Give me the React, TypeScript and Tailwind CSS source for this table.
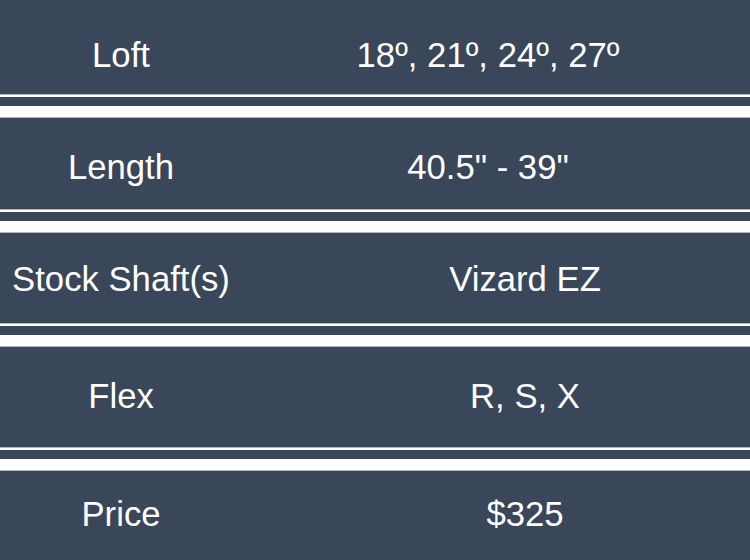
import React from "react";

const font = { fontFamily: '"Liberation Sans", Arial, sans-serif' };

function Sep() {
  return (
    <div className="flex flex-col">
      <div className="h-px bg-[#b3b8bf]" />
      <div className="h-[2px] bg-white" />
      <div className="h-[9px] bg-[#3a4659]" />
      <div className="h-[11px] bg-white" />
      <div className="h-px bg-[#b3b8bf]" />
    </div>
  );
}

export default function App() {
  return (
    <div
      className="w-[750px] h-[560px] overflow-hidden bg-[#3a4659] text-white text-[34.7px] leading-[34px]"
      style={font}
    >
      <div className="h-[94px] flex pt-[38px]">
        <div className="w-[242px] text-center">Loft</div>
        <div className="flex-1 text-center pr-[16px]">18º, 21º, 24º, 27º</div>
      </div>
      <Sep />
      <div className="h-[91px] flex pt-[32px]">
        <div className="w-[242px] text-center">Length</div>
        <div className="flex-1 text-center pr-[16px]">40.5" - 39"</div>
      </div>
      <Sep />
      <div className="h-[90px] flex pt-[29px]">
        <div className="w-[242px] text-center whitespace-nowrap">Stock Shaft(s)</div>
        <div className="flex-1 text-center pl-[58px]">Vizard EZ</div>
      </div>
      <Sep />
      <div className="h-[100px] flex pt-[32px]">
        <div className="w-[242px] text-center">Flex</div>
        <div className="flex-1 text-center pl-[58px]">R, S, X</div>
      </div>
      <Sep />
      <div className="h-[88px] flex pt-[26px]">
        <div className="w-[242px] text-center">Price</div>
        <div className="flex-1 text-center pl-[58px]">$325</div>
      </div>
    </div>
  );
}
